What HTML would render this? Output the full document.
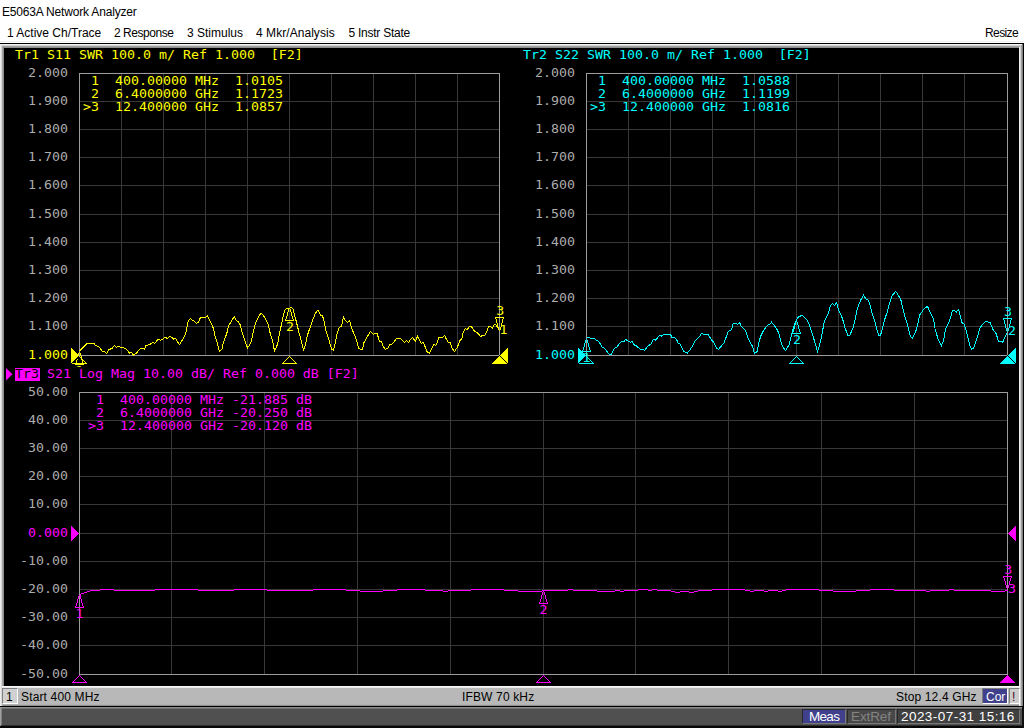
<!DOCTYPE html>
<html lang="en"><head><meta charset="utf-8"><title>E5063A Network Analyzer</title>
<style>
html,body{margin:0;padding:0}
body{width:1024px;height:728px;position:relative;overflow:hidden;background:#fff;font-family:"Liberation Sans",sans-serif;color:#000}
div,span{box-sizing:border-box}
.a{position:absolute}
.u{position:absolute;white-space:pre;font-size:12px;line-height:14px;height:14px}
.m{position:absolute;white-space:pre;font-family:"DejaVu Sans Mono","Liberation Mono",monospace;font-size:13.29px;line-height:16px;height:16px;transform:scaleY(0.86);transform-origin:0 0;letter-spacing:0}
.r{text-align:right;width:60px}
.y{color:#ffff00}.c{color:#00ffff}.g{color:#ff00ff}.l{color:#acacac}
svg{position:absolute;left:0;top:0}
</style></head><body>

<div class="u" id="title" style="left:2px;top:5px;letter-spacing:-0.18px">E5063A Network Analyzer</div>
<div class="u" id="menu0" style="left:7px;top:26px;letter-spacing:0px">1 Active Ch/Trace</div>
<div class="u" id="menu1" style="left:114px;top:26px;letter-spacing:-0.45px">2 Response</div>
<div class="u" id="menu2" style="left:187px;top:26px;letter-spacing:0px">3 Stimulus</div>
<div class="u" id="menu3" style="left:256px;top:26px;letter-spacing:0.05px">4 Mkr/Analysis</div>
<div class="u" id="menu4" style="left:348.5px;top:26px;letter-spacing:-0.25px">5 Instr State</div>
<div class="u" id="menu5" style="left:985px;top:26px;letter-spacing:-0.6px">Resize</div>
<div class="a" style="left:0;top:41px;width:1024px;height:1px;background:#f2f2f2"></div>
<div class="a" style="left:0;top:43px;width:1024px;height:664px;background:#000"></div>
<div class="a" style="left:0;top:686px;width:1023px;height:20px;background:#b8b8b8"></div>
<div class="a" style="left:0;top:686px;width:1023px;height:1px;background:#f8f8f8"></div>
<div class="a" style="left:0;top:687px;width:1023px;height:1px;background:#e8e8e8"></div>
<div class="a" style="left:0;top:704px;width:1023px;height:1px;background:#b0b0b0"></div>
<div class="a" style="left:0;top:705px;width:1023px;height:1px;background:#909090"></div>
<div class="a" style="left:0;top:44px;width:1023px;height:1px;background:#f4f4f4"></div>
<div class="a" style="left:0;top:45px;width:1023px;height:1px;background:#d0d0d0"></div>
<div class="a" style="left:0;top:46px;width:1023px;height:1px;background:#a0a0a0"></div>
<div class="a" style="left:0;top:47px;width:1023px;height:1px;background:#909090"></div>
<div class="a" style="left:0px;top:44px;width:1px;height:662px;background:#ececec"></div>
<div class="a" style="left:1px;top:45px;width:1px;height:661px;background:#d8d8d8"></div>
<div class="a" style="left:2px;top:46px;width:1px;height:640px;background:#a4a4a4"></div>
<div class="a" style="left:3px;top:47px;width:1px;height:639px;background:#8c8c8c"></div>
<div class="a" style="left:1019px;top:47px;width:1px;height:659px;background:#f4f4f4"></div>
<div class="a" style="left:1020px;top:46px;width:1px;height:660px;background:#d0d0d0"></div>
<div class="a" style="left:1021px;top:45px;width:1px;height:661px;background:#a0a0a0"></div>
<div class="a" style="left:1022px;top:44px;width:1px;height:662px;background:#808080"></div>
<div class="a" style="left:2px;top:688px;width:16px;height:16px;background:#d0d0d0;border-top:1px solid #808080;border-left:1px solid #808080;border-right:1px solid #fff;border-bottom:1px solid #fff"></div>
<div class="u" id="s1" style="left:6px;top:690px;font-size:12px">1</div>
<div class="u" id="sstart" style="left:21px;top:690px;font-size:12px;letter-spacing:0.15px">Start 400 MHz</div>
<div class="u" id="sifbw" style="left:462px;top:690px;font-size:12px;letter-spacing:0.15px">IFBW 70 kHz</div>
<div class="u" id="sstop" style="left:896px;top:690px;font-size:12px;letter-spacing:0.15px">Stop 12.4 GHz</div>
<div class="a" style="left:982px;top:688px;width:26px;height:16px;background:#40408c;border-top:1px solid #808080;border-left:1px solid #808080;border-right:1px solid #fff;border-bottom:1px solid #fff"></div>
<div class="u" id="scor" style="left:986px;top:690px;font-size:12px;color:#fff">Cor</div>
<div class="a" style="left:1009px;top:688px;width:11px;height:16px;background:#cccccc;border-top:1px solid #808080;border-left:1px solid #808080;border-right:1px solid #fff;border-bottom:1px solid #fff"></div>
<div class="u" id="sbang" style="left:1012px;top:690px;font-size:12px;color:#400020">!</div>
<div class="a" style="left:0;top:707px;width:1024px;height:21px;background:#505050"></div>
<div class="a" style="left:0;top:707px;width:1024px;height:1px;background:#8c8c8c"></div>
<div class="a" style="left:0;top:708px;width:1024px;height:1px;background:#707070"></div>
<div class="a" style="left:0;top:725px;width:1024px;height:1px;background:#303030"></div>
<div class="a" style="left:0;top:726px;width:1024px;height:2px;background:#080808"></div>
<div class="a" style="left:0;top:707px;width:1px;height:19px;background:#a0a0a0"></div>
<div class="a" style="left:1px;top:708px;width:1px;height:17px;background:#808080"></div>
<div class="a" style="left:1022px;top:707px;width:2px;height:21px;background:#101010"></div>
<div class="a" style="left:802px;top:709px;width:44px;height:15px;background:#40408c;border:1px solid #282828;border-right-color:#787878;border-bottom-color:#787878"></div>
<div class="u" id="bmeas" style="left:809px;top:709px;font-size:13.5px;line-height:16px;height:16px;letter-spacing:-0.7px;color:#fff">Meas</div>
<div class="a" style="left:847px;top:709px;width:49px;height:15px;background:#484848;border:1px solid #282828;border-right-color:#787878;border-bottom-color:#787878"></div>
<div class="u" id="bext" style="left:851px;top:709px;font-size:13.5px;line-height:16px;height:16px;letter-spacing:-0.1px;color:#848484">ExtRef</div>
<div class="a" style="left:897px;top:709px;width:123px;height:15px;background:#404040;border:1px solid #282828;border-right-color:#787878;border-bottom-color:#787878"></div>
<div class="u" id="bdate" style="left:901px;top:709px;font-size:13.5px;line-height:16px;height:16px;letter-spacing:0.45px;color:#fff">2023-07-31 15:16</div>
<svg width="1024" height="728" viewBox="0 0 1024 728" shape-rendering="crispEdges">
<path fill="#383838" d="M121 73h1v282h-1zM79 101h420v1h-420zM163 73h1v282h-1zM79 129h420v1h-420zM205 73h1v282h-1zM79 157h420v1h-420zM247 73h1v282h-1zM79 185h420v1h-420zM289 73h1v282h-1zM79 214h420v1h-420zM331 73h1v282h-1zM79 242h420v1h-420zM373 73h1v282h-1zM79 270h420v1h-420zM415 73h1v282h-1zM79 298h420v1h-420zM457 73h1v282h-1zM79 326h420v1h-420z"/>
<path fill-rule="evenodd" fill="#9c9c9c" d="M79 73h421v283h-421z M80 74v281h419v-281z"/>
<path fill="#383838" d="M628 73h1v282h-1zM586 101h421v1h-421zM670 73h1v282h-1zM586 129h421v1h-421zM712 73h1v282h-1zM586 157h421v1h-421zM754 73h1v282h-1zM586 185h421v1h-421zM796 73h1v282h-1zM586 214h421v1h-421zM838 73h1v282h-1zM586 242h421v1h-421zM880 73h1v282h-1zM586 270h421v1h-421zM922 73h1v282h-1zM586 298h421v1h-421zM964 73h1v282h-1zM586 326h421v1h-421z"/>
<path fill-rule="evenodd" fill="#9c9c9c" d="M586 73h422v283h-422z M587 74v281h420v-281z"/>
<path fill="#383838" d="M171 392h1v282h-1zM79 420h928v1h-928zM264 392h1v282h-1zM79 448h928v1h-928zM357 392h1v282h-1zM79 476h928v1h-928zM450 392h1v282h-1zM79 504h928v1h-928zM543 392h1v282h-1zM79 533h928v1h-928zM635 392h1v282h-1zM79 561h928v1h-928zM728 392h1v282h-1zM79 589h928v1h-928zM821 392h1v282h-1zM79 617h928v1h-928zM914 392h1v282h-1zM79 645h928v1h-928z"/>
<path fill-rule="evenodd" fill="#9c9c9c" d="M79 392h929v283h-929z M80 393v281h927v-281z"/>
<polyline fill="none" stroke="#ffff00" stroke-width="1" points="79.6,351 87.3,343.3 93.8,343.3 95.5,345.4 99.8,347.6 102.4,351.4 104.5,351.4 106.6,353.4 108.8,349.7 112.2,348.3 114.4,345.2 116.5,347.4 118.3,346.3 121.7,347.6 125.6,348.3 127.7,350.6 129.4,353.2 131.3,352.3 133.5,355.3 137.2,352.3 139.3,349.3 142.3,348.3 144.5,349.3 145.8,345.7 150,344.6 152.6,342.4 154.8,343.4 158.2,339.2 160.4,340.4 162.9,339 164.9,337.4 167.4,338.3 169.6,336.2 171.7,337.4 173.7,339.4 175.6,338.3 177.8,342.4 179.5,344.6 182.1,340.3 185.5,334.2 186.8,328.2 188.1,321.4 190.4,318.3 192.4,320.5 194.1,320.9 196.5,323.5 198.4,322.2 200.5,317.5 205.5,317.5 207.6,315.6 209.6,320.5 213.4,328.2 215.1,336 217.3,342.8 219.4,351.3 221.8,349.7 223.7,341.5 226.7,333.8 228.5,326.1 231.5,320.9 234.3,316.5 236.5,320.9 238.3,321.6 240.5,325.2 242.2,333 246.1,344.1 247.6,348 251,342.4 253.2,332.1 255.3,323.5 258.8,316.2 260.9,313.2 262.6,314.5 265.6,318.8 268.2,324.4 269.9,332.1 272.5,340.7 274.5,351 277.7,344.1 279.4,333.8 281.5,324.4 283.2,316.2 285,309.8 287.1,308.5 289.3,308.9 290.5,307.2 293.1,308.9 294.8,315.8 297,324.4 299.1,333 301.3,340.7 303.4,350.1 305.6,344.1 307.3,335.5 310.3,326.9 312.5,320.1 315.5,313.2 317.2,310.4 318.5,310.6 320.6,315.3 322.3,315.3 324.1,320.9 326.2,332.1 328.4,338.1 330.1,344.1 331.6,349.1 333.5,350.1 335.4,342.4 337.2,333 339.3,327.4 341.5,326.1 343.4,317.3 345.3,320.5 347.5,322.5 349.6,320.5 351.3,327.4 354.4,334.7 356.5,340.3 358.6,348 360.8,349.5 362.5,349.3 363.8,342.8 366,339 368.1,335.5 370.4,331.2 373.4,334.2 375.4,333.4 377.3,333.8 379.3,341.5 381.4,341.5 383.6,347.1 385.5,349.5 387.9,348 389.6,345 391.7,344.1 394.7,341.1 396.5,338.3 398.6,339 400.3,338.3 402.5,340.3 404.6,342.6 406.3,340.4 408.5,342.6 410.2,339.8 412.4,337.4 413.7,339 415.4,341.1 417.5,336.4 419.4,339.4 421.2,343.3 423.3,342.4 425.5,347.6 426.8,351.4 429.5,353.4 431.5,349.3 433.6,344.6 436,345.4 437.5,341.5 438.8,337.7 442.6,337.4 444.6,335.5 446.5,339.4 448.2,342.4 450.4,342.8 452.1,348.4 454.5,351.4 457.4,347.4 459.4,341.5 462,338.1 463.3,332.1 465,328.7 467.3,329.5 469.3,326.5 471.4,326.5 473.6,330.4 476.6,332.5 478.3,333.4 480.5,336.4 482.6,335.5 484.8,335.4 486.5,332.1 488.6,326.9 490.3,326.5 492.5,328.2 494.2,324.8 495.7,324.4 496.8,326.5 498.9,328.7"/>
<polyline fill="none" stroke="#00ffff" stroke-width="1" points="586.8,338.3 588.4,337.3 590.4,338.3 594.3,338.3 596.7,340.5 598.7,341.5 600.6,344.2 602.1,347.1 604.5,348.4 607,351.5 609.4,354.4 611.4,354.4 613.8,349.5 615.3,347.6 617.2,346.9 619.2,343.7 621.6,341.2 623.6,342 625.5,339.3 628,341.2 630.4,342.2 632.2,341.2 634.3,345.1 636.3,345.6 638.2,347.6 640.5,349.5 643.1,349.3 644.8,350.3 646.5,347.6 648.5,345.6 650.9,344.2 652.9,340.2 654.3,339.3 655.8,340.2 657.8,337.3 659.7,335.4 661.2,336.3 663.6,334.4 670.4,334.4 671.9,337.3 674.8,337.8 676.8,340.2 678.3,343.2 680.2,344.2 683.9,351.5 687.3,353.2 690.3,349.5 692.7,345.6 695.6,340.2 699.5,336.8 701.5,333.4 703.9,334.6 708.3,334.6 710.8,338.8 714.2,343.2 716.6,348.1 718.4,349.5 720.5,347.1 724.4,342.2 725.9,337.8 728.3,331.5 731.3,330 733.2,323.6 736.6,323.6 737.6,324.3 739.6,322.4 741,326.1 745.4,330.5 748.4,338.8 752.8,347.1 754.4,353.4 757.1,351.5 758.6,343.7 760.6,336.3 763.5,330.5 765.9,327.1 768.4,324.6 769.8,324.1 771.5,322.2 773.3,324.1 777.4,330 779.4,334.9 781.3,343.7 783.3,347.6 785.5,350.5 789.2,344.6 791.1,336.8 793.6,327.1 796,321.2 797.9,317.3 801.9,315.3 804.3,317.3 806.7,319.7 809.2,324.1 811.6,331.9 814.1,339.8 817.5,351.5 819.9,343.7 821.9,334.9 824.3,321.2 828.2,313.9 830.5,305.6 832.6,303.4 834.4,305.6 836.5,302.5 838.5,309.5 842.4,318.3 844.8,327.1 847.8,335.4 849.7,335.4 853.1,328 855.6,317.3 857.5,308 860.9,299.7 863.6,295.3 865.8,298.9 868.3,300.2 870,304.6 872.4,314.4 874.9,321.2 876.8,329 878.8,335.4 880.5,335.4 882.7,327.1 884.6,319.7 887.1,312.4 889.5,303.6 892,295.8 895.6,291.4 897.8,294.3 900.8,299.7 903.2,309.5 905.2,317.3 907.6,325.1 910.5,336.8 912.5,338.3 915.9,331 917.9,323.2 919.8,314.9 923.2,310 925.2,307.5 927.6,306.6 929.6,311.4 933.5,319.2 935.1,329 938.2,339.5 941.4,345.9 943.5,340.6 945.6,329 947.7,324.7 950.4,318.4 952.5,310.4 954.6,310.4 956.4,312 958.5,309.4 959.9,314.2 962,322.6 964.1,324.2 965.7,329 967.8,337.4 970,345.9 971.5,349.1 973.7,348 975.8,341.6 977.9,335.3 980,327.9 982.6,324.2 985.8,321.3 990.1,322.6 992.7,329 995.9,333.2 998.5,341.1 1001.7,341.6 1002.7,342.2 1004.9,337.4 1007.3,332.7"/>
<path fill="#ff00ff" d="M79 595h2v1h-2zM80 594h1v1h-1zM81 593h3v1h-3zM84 592h3v1h-3zM87 591h3v1h-3zM90 590h10v1h-10zM100 589h14v1h-14zM114 590h41v1h-41zM155 589h43v1h-43zM198 590h36v1h-36zM234 589h33v1h-33zM267 590h46v1h-46zM313 589h33v1h-33zM346 590h14v1h-14zM360 591h23v1h-23zM383 590h14v1h-14zM397 589h28v1h-28zM425 590h18v1h-18zM443 591h5v1h-5zM448 590h23v1h-23zM471 589h33v1h-33zM504 590h14v1h-14zM518 591h24v1h-24zM542 590h26v1h-26zM568 589h5v1h-5zM573 590h24v1h-24zM597 591h18v1h-18zM615 590h5v1h-5zM620 591h4v1h-4zM624 590h14v1h-14zM638 589h10v1h-10zM648 590h4v1h-4zM652 589h5v1h-5zM657 590h14v1h-14zM671 591h4v1h-4zM675 592h5v1h-5zM680 591h9v1h-9zM689 592h5v1h-5zM694 591h4v1h-4zM698 590h14v1h-14zM712 589h33v1h-33zM745 590h5v1h-5zM750 591h4v1h-4zM754 590h10v1h-10zM764 591h4v1h-4zM768 590h10v1h-10zM778 591h4v1h-4zM782 590h4v1h-4zM786 589h33v1h-33zM819 590h14v1h-14zM833 591h23v1h-23zM856 590h14v1h-14zM870 589h24v1h-24zM894 590h32v1h-32zM926 591h4v1h-4zM930 590h19v1h-19zM949 589h5v1h-5zM954 590h37v1h-37zM991 591h14v1h-14zM1005 590h3v1h-3z"/>
<path fill="#ffff00" d="M79 355.5L71 347.5V363.5Z"/>
<path fill="#ffff00" d="M500 355.5L508 347.5V363.5Z"/>
<path fill="none" stroke="#ffff00" stroke-width="1" d="M79.5 356.5L86.5 363.5H72.5Z"/>
<path fill="none" stroke="#ffff00" stroke-width="1" d="M289.5 356.5L296.5 363.5H282.5Z"/>
<path fill="#ffff00" d="M499.5 355.8L507.2 364H491.8Z"/>
<path fill="#ffff00" d="M79 352h1v1h-1zM78 353h1v1h-1zM80 353h1v1h-1zM78 354h1v1h-1zM80 354h1v1h-1zM78 355h1v1h-1zM80 355h1v1h-1zM77 356h1v1h-1zM81 356h1v1h-1zM77 357h1v1h-1zM81 357h1v1h-1zM77 358h1v1h-1zM81 358h1v1h-1zM77 359h1v1h-1zM81 359h1v1h-1zM76 360h1v1h-1zM82 360h1v1h-1zM76 361h1v1h-1zM82 361h1v1h-1zM76 362h1v1h-1zM82 362h1v1h-1zM75 363h1v1h-1zM83 363h1v1h-1zM75 364h9v1h-9z"/>
<path fill="#ffff00" d="M289 308h1v1h-1zM288 309h1v1h-1zM290 309h1v1h-1zM288 310h1v1h-1zM290 310h1v1h-1zM288 311h1v1h-1zM290 311h1v1h-1zM287 312h1v1h-1zM291 312h1v1h-1zM287 313h1v1h-1zM291 313h1v1h-1zM287 314h1v1h-1zM291 314h1v1h-1zM287 315h1v1h-1zM291 315h1v1h-1zM286 316h1v1h-1zM292 316h1v1h-1zM286 317h1v1h-1zM292 317h1v1h-1zM286 318h1v1h-1zM292 318h1v1h-1zM285 319h1v1h-1zM293 319h1v1h-1zM285 320h9v1h-9z"/>
<path fill="#ffff00" d="M499 330h1v1h-1zM498 329h1v1h-1zM500 329h1v1h-1zM498 328h1v1h-1zM500 328h1v1h-1zM498 327h1v1h-1zM500 327h1v1h-1zM497 326h1v1h-1zM501 326h1v1h-1zM497 325h1v1h-1zM501 325h1v1h-1zM497 324h1v1h-1zM501 324h1v1h-1zM497 323h1v1h-1zM501 323h1v1h-1zM496 322h1v1h-1zM502 322h1v1h-1zM496 321h1v1h-1zM502 321h1v1h-1zM496 320h1v1h-1zM502 320h1v1h-1zM496 319h1v1h-1zM502 319h1v1h-1zM495 318h1v1h-1zM503 318h1v1h-1zM495 317h9v1h-9z"/>
<path stroke="#000" stroke-width="1" fill="none" d="M499.5 355.5L507.5 363.5M79 356.5L73 362.5"/>
<path fill="#00ffff" d="M586 355.5L578 347.5V363.5Z"/>
<path fill="#00ffff" d="M1008 355.5L1016 347.5V363.5Z"/>
<path fill="none" stroke="#00ffff" stroke-width="1" d="M586.5 356.5L593.5 363.5H579.5Z"/>
<path fill="none" stroke="#00ffff" stroke-width="1" d="M796.5 356.5L803.5 363.5H789.5Z"/>
<path fill="#00ffff" d="M1007.5 355.8L1015.2 364H999.8Z"/>
<path fill="#00ffff" d="M586 339h1v1h-1zM585 340h1v1h-1zM587 340h1v1h-1zM585 341h1v1h-1zM587 341h1v1h-1zM585 342h1v1h-1zM587 342h1v1h-1zM584 343h1v1h-1zM588 343h1v1h-1zM584 344h1v1h-1zM588 344h1v1h-1zM584 345h1v1h-1zM588 345h1v1h-1zM584 346h1v1h-1zM588 346h1v1h-1zM583 347h1v1h-1zM589 347h1v1h-1zM583 348h1v1h-1zM589 348h1v1h-1zM583 349h1v1h-1zM589 349h1v1h-1zM582 350h1v1h-1zM590 350h1v1h-1zM582 351h9v1h-9z"/>
<path fill="#00ffff" d="M796 321h1v1h-1zM795 322h1v1h-1zM797 322h1v1h-1zM795 323h1v1h-1zM797 323h1v1h-1zM795 324h1v1h-1zM797 324h1v1h-1zM794 325h1v1h-1zM798 325h1v1h-1zM794 326h1v1h-1zM798 326h1v1h-1zM794 327h1v1h-1zM798 327h1v1h-1zM794 328h1v1h-1zM798 328h1v1h-1zM793 329h1v1h-1zM799 329h1v1h-1zM793 330h1v1h-1zM799 330h1v1h-1zM793 331h1v1h-1zM799 331h1v1h-1zM792 332h1v1h-1zM800 332h1v1h-1zM792 333h9v1h-9z"/>
<path fill="#00ffff" d="M1007 331h1v1h-1zM1006 330h1v1h-1zM1008 330h1v1h-1zM1006 329h1v1h-1zM1008 329h1v1h-1zM1006 328h1v1h-1zM1008 328h1v1h-1zM1005 327h1v1h-1zM1009 327h1v1h-1zM1005 326h1v1h-1zM1009 326h1v1h-1zM1005 325h1v1h-1zM1009 325h1v1h-1zM1005 324h1v1h-1zM1009 324h1v1h-1zM1004 323h1v1h-1zM1010 323h1v1h-1zM1004 322h1v1h-1zM1010 322h1v1h-1zM1004 321h1v1h-1zM1010 321h1v1h-1zM1004 320h1v1h-1zM1010 320h1v1h-1zM1003 319h1v1h-1zM1011 319h1v1h-1zM1003 318h9v1h-9z"/>
<path stroke="#000" stroke-width="1" fill="none" d="M1007.5 355.5L1015.5 363.5M586 356.5L580 362.5"/>
<path fill="#ff00ff" d="M79 533.5L71 525.5V541.5Z"/>
<path fill="#ff00ff" d="M1008 533.5L1016 525.5V541.5Z"/>
<path fill="none" stroke="#ff00ff" stroke-width="1" d="M79.5 675.5L86.5 682.5H72.5Z"/>
<path fill="none" stroke="#ff00ff" stroke-width="1" d="M543.5 675.5L550.5 682.5H536.5Z"/>
<path fill="#ff00ff" d="M1007.5 674.8L1015.2 683H999.8Z"/>
<path fill="#ff00ff" d="M79 595h1v1h-1zM78 596h1v1h-1zM80 596h1v1h-1zM78 597h1v1h-1zM80 597h1v1h-1zM78 598h1v1h-1zM80 598h1v1h-1zM77 599h1v1h-1zM81 599h1v1h-1zM77 600h1v1h-1zM81 600h1v1h-1zM77 601h1v1h-1zM81 601h1v1h-1zM77 602h1v1h-1zM81 602h1v1h-1zM76 603h1v1h-1zM82 603h1v1h-1zM76 604h1v1h-1zM82 604h1v1h-1zM76 605h1v1h-1zM82 605h1v1h-1zM75 606h1v1h-1zM83 606h1v1h-1zM75 607h9v1h-9z"/>
<path fill="#ff00ff" d="M543 591h1v1h-1zM542 592h1v1h-1zM544 592h1v1h-1zM542 593h1v1h-1zM544 593h1v1h-1zM542 594h1v1h-1zM544 594h1v1h-1zM541 595h1v1h-1zM545 595h1v1h-1zM541 596h1v1h-1zM545 596h1v1h-1zM541 597h1v1h-1zM545 597h1v1h-1zM541 598h1v1h-1zM545 598h1v1h-1zM540 599h1v1h-1zM546 599h1v1h-1zM540 600h1v1h-1zM546 600h1v1h-1zM540 601h1v1h-1zM546 601h1v1h-1zM539 602h1v1h-1zM547 602h1v1h-1zM539 603h9v1h-9z"/>
<path fill="#ff00ff" d="M1007 588h1v1h-1zM1006 587h1v1h-1zM1008 587h1v1h-1zM1006 586h1v1h-1zM1008 586h1v1h-1zM1006 585h1v1h-1zM1008 585h1v1h-1zM1005 584h1v1h-1zM1009 584h1v1h-1zM1005 583h1v1h-1zM1009 583h1v1h-1zM1005 582h1v1h-1zM1009 582h1v1h-1zM1005 581h1v1h-1zM1009 581h1v1h-1zM1004 580h1v1h-1zM1010 580h1v1h-1zM1004 579h1v1h-1zM1010 579h1v1h-1zM1004 578h1v1h-1zM1010 578h1v1h-1zM1003 577h1v1h-1zM1011 577h1v1h-1zM1003 576h9v1h-9z"/>
</svg>
<div class="m y" id="n11" style="left:75.6px;top:365.4px;">1</div>
<div class="a" style="left:4px;top:367px;width:1015px;height:16px;background:#000"></div>
<div class="m y" id="t1" style="left:15px;top:49.4px;">Tr1 S11 SWR 100.0 m/ Ref 1.000  [F2]</div>
<div class="m c" id="t2" style="left:523px;top:49.4px;">Tr2 S22 SWR 100.0 m/ Ref 1.000  [F2]</div>
<svg width="48" height="16" viewBox="0 366 48 16" style="top:366px"><path fill="#ff00ff" d="M6 368L12.5 374.2L6 380.5Z"/><rect x="15" y="368" width="25" height="13" fill="#ff00ff"/></svg>
<div class="m g" id="t3" style="left:15px;top:368.4px;"><span style="color:#000">Tr3</span> S21 Log Mag 10.00 dB/ Ref 0.000 dB [F2]</div>
<div class="m r l" style="left:8px;top:67.4px;">2.000</div>
<div class="m r l" style="left:8px;top:95.4px;">1.900</div>
<div class="m r l" style="left:8px;top:123.4px;">1.800</div>
<div class="m r l" style="left:8px;top:151.4px;">1.700</div>
<div class="m r l" style="left:8px;top:179.4px;">1.600</div>
<div class="m r l" style="left:8px;top:208.4px;">1.500</div>
<div class="m r l" style="left:8px;top:236.4px;">1.400</div>
<div class="m r l" style="left:8px;top:264.4px;">1.300</div>
<div class="m r l" style="left:8px;top:292.4px;">1.200</div>
<div class="m r l" style="left:8px;top:320.4px;">1.100</div>
<div class="m r y" style="left:8px;top:349.4px;">1.000</div>
<div class="m r l" style="left:515px;top:67.4px;">2.000</div>
<div class="m r l" style="left:515px;top:95.4px;">1.900</div>
<div class="m r l" style="left:515px;top:123.4px;">1.800</div>
<div class="m r l" style="left:515px;top:151.4px;">1.700</div>
<div class="m r l" style="left:515px;top:179.4px;">1.600</div>
<div class="m r l" style="left:515px;top:208.4px;">1.500</div>
<div class="m r l" style="left:515px;top:236.4px;">1.400</div>
<div class="m r l" style="left:515px;top:264.4px;">1.300</div>
<div class="m r l" style="left:515px;top:292.4px;">1.200</div>
<div class="m r l" style="left:515px;top:320.4px;">1.100</div>
<div class="m r c" style="left:515px;top:349.4px;">1.000</div>
<div class="m r l" style="left:8px;top:386.4px;">50.00</div>
<div class="m r l" style="left:8px;top:414.4px;">40.00</div>
<div class="m r l" style="left:8px;top:442.4px;">30.00</div>
<div class="m r l" style="left:8px;top:470.4px;">20.00</div>
<div class="m r l" style="left:8px;top:498.4px;">10.00</div>
<div class="m r g" style="left:8px;top:527.4px;">0.000</div>
<div class="m r l" style="left:8px;top:555.4px;">-10.00</div>
<div class="m r l" style="left:8px;top:583.4px;">-20.00</div>
<div class="m r l" style="left:8px;top:611.4px;">-30.00</div>
<div class="m r l" style="left:8px;top:639.4px;">-40.00</div>
<div class="m r l" style="left:8px;top:668.4px;">-50.00</div>
<div class="m y" id="ma0" style="left:83px;top:75.4px;"> 1  400.00000 MHz  1.0105</div>
<div class="m y" id="ma1" style="left:83px;top:88.4px;"> 2  6.4000000 GHz  1.1723</div>
<div class="m y" id="ma2" style="left:83px;top:101.4px;">&gt;3  12.400000 GHz  1.0857</div>
<div class="m c" id="mb0" style="left:590px;top:75.4px;"> 1  400.00000 MHz  1.0588</div>
<div class="m c" id="mb1" style="left:590px;top:88.4px;"> 2  6.4000000 GHz  1.1199</div>
<div class="m c" id="mb2" style="left:590px;top:101.4px;">&gt;3  12.400000 GHz  1.0816</div>
<div class="m g" id="mc0" style="left:88px;top:394.4px;"> 1  400.00000 MHz -21.885 dB</div>
<div class="m g" id="mc1" style="left:88px;top:407.4px;"> 2  6.4000000 GHz -20.250 dB</div>
<div class="m g" id="mc2" style="left:88px;top:420.4px;">&gt;3  12.400000 GHz -20.120 dB</div>
<div class="m y" id="n12" style="left:285.9px;top:321.4px;">2</div>
<div class="m y" id="n13" style="left:496.2px;top:305.4px;">3</div>
<div class="m y" id="n1t" style="left:499.5px;top:324.4px;">1</div>
<div class="m c" id="n21" style="left:582.6px;top:352.4px;">1</div>
<div class="m c" id="n22" style="left:792.9px;top:334.4px;">2</div>
<div class="m c" id="n23" style="left:1004px;top:306.4px;">3</div>
<div class="m c" id="n2t" style="left:1008px;top:325.4px;">2</div>
<div class="m g" id="n31" style="left:75.6px;top:608.4px;">1</div>
<div class="m g" id="n32" style="left:539.6px;top:604.4px;">2</div>
<div class="m g" id="n33" style="left:1004.2px;top:564.4px;">3</div>
<div class="m g" id="n3t" style="left:1008px;top:583.4px;">3</div>
</body></html>
